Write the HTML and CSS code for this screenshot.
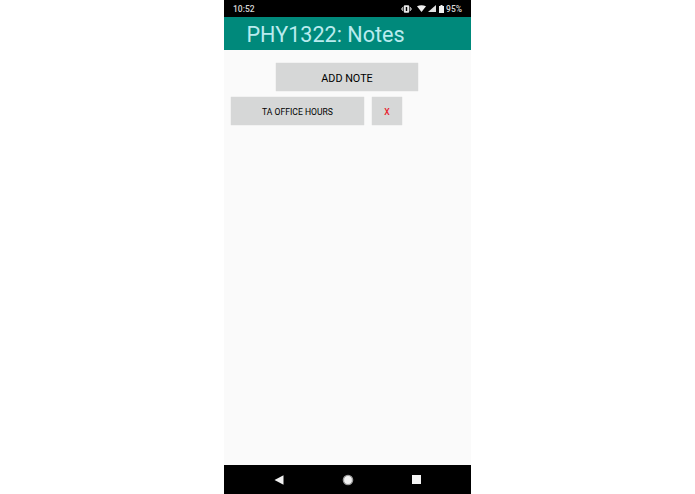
FILE: index.html
```html
<!DOCTYPE html>
<html>
<head>
  <title>PHY1322: Notes</title>
  <link rel="stylesheet" href="styles.css">
</head>
<body>
  <div class="phone">
    <div class="status-bar">
      <span class="clock">10:52</span>
      <div class="status-icons">
        <svg class="icon-vibrate" width="11" height="8" viewBox="0 0 11 8">
          <rect x="2.8" y="0.3" width="5.4" height="7.4" rx="1" fill="#e8e8e8"/>
          <rect x="4.8" y="2" width="1.4" height="4" fill="#000"/>
          <rect x="1.2" y="2" width="1" height="4" fill="#ccc"/>
          <rect x="8.8" y="2" width="1" height="4" fill="#ccc"/>
          <rect x="0" y="3" width="0.8" height="2" fill="#999"/>
          <rect x="10.2" y="3" width="0.8" height="2" fill="#999"/>
        </svg>
        <svg class="icon-wifi" width="9" height="7" viewBox="0 0 9 7">
          <path d="M0 1.2 Q4.5 -0.8 9 1.2 L4.5 7 Z" fill="#f0f0f0"/>
        </svg>
        <svg class="icon-signal" width="8" height="7" viewBox="0 0 8 7">
          <path d="M8 0 V7 H0 Z" fill="#e0e0e0"/>
        </svg>
        <svg class="icon-battery" width="5" height="8" viewBox="0 0 5 8">
          <path d="M1.5 0 H3.5 V1 H5 V8 H0 V1 H1.5 Z" fill="#f0f0f0"/>
        </svg>
        <span class="battery">95%</span>
      </div>
    </div>
    <div class="app-bar">PHY1322: Notes</div>
    <div class="content">
      <div class="add-row">
        <button class="btn btn-add">ADD NOTE</button>
      </div>
      <div class="note-row">
        <button class="btn btn-note">TA OFFICE HOURS</button>
        <button class="btn btn-delete">X</button>
      </div>
    </div>
    <div class="nav-bar">
      <svg width="10" height="10" viewBox="0 0 10 10">
        <path d="M9.5 0.3 V9.7 L0.5 5 Z" fill="#f0f0f0"/>
      </svg>
      <svg width="12" height="12" viewBox="0 0 12 12">
        <circle cx="6" cy="6" r="4.6" fill="#f0f0f0" stroke="#999" stroke-width="1.4"/>
      </svg>
      <svg width="9" height="9" viewBox="0 0 9 9">
        <rect width="9" height="9" fill="#f4f4f4"/>
      </svg>
    </div>
  </div>
</body>
</html>
```

FILE: styles.css
```css
html, body {
  margin: 0;
  padding: 0;
  height: 100%;
  background: #fff;
}

body {
  font-family: Roboto, "Liberation Sans", sans-serif;
  display: flex;
  justify-content: center;
}

.phone {
  width: 247px;
  height: 494px;
  display: flex;
  flex-direction: column;
  background: #fafafa;
}

.status-bar {
  height: 17px;
  background: #000;
  color: #d8d8d8;
  font-size: 8.5px;
  font-weight: 500;
  display: flex;
  align-items: center;
  justify-content: space-between;
  padding: 0 9px 0 9px;
}

.status-icons {
  display: flex;
  align-items: center;
}

.icon-vibrate {
  margin-right: 5px;
}

.icon-signal {
  margin: 0 3px 0 2px;
}

.battery {
  margin-left: 2px;
}

.app-bar {
  height: 33px;
  background: #00897b;
  color: #b9ebee;
  font-size: 21.6px;
  line-height: 35px;
  padding-left: 22.5px;
}

.content {
  flex: 1;
}

.add-row {
  padding: 13px 0 0 52px;
}

.note-row {
  display: flex;
  gap: 8px;
  padding: 6px 0 0 7px;
}

.btn {
  display: block;
  border: 0;
  padding: 2px 0 0;
  margin: 0;
  background: #d6d7d7;
  color: #000;
  font-family: inherit;
  box-shadow: 0 0 1px #c8c8c8;
}

.btn-add {
  width: 142px;
  height: 28px;
  font-size: 10.8px;
}

.btn-note {
  width: 133px;
  height: 28px;
  font-size: 8.6px;
}

.btn-delete {
  width: 30px;
  height: 28px;
  font-size: 8.6px;
  font-weight: 500;
  color: #e8202c;
}

.nav-bar {
  height: 29px;
  background: #000;
  display: flex;
  align-items: center;
  padding-left: 50px;
  gap: 58px;
}
```
